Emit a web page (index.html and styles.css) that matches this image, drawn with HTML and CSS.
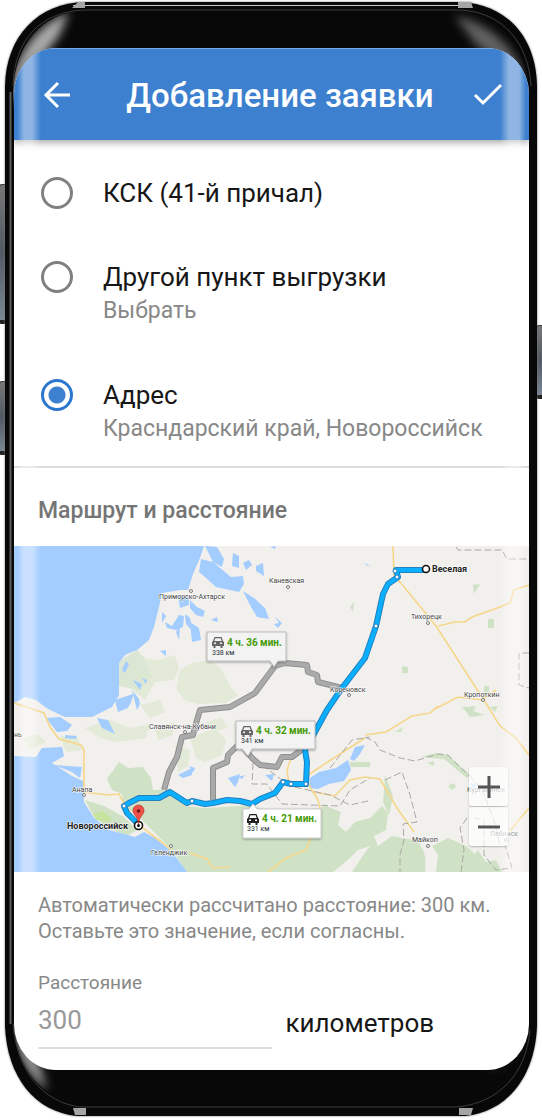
FILE: index.html
```html
<!DOCTYPE html>
<html lang="ru">
<head>
<meta charset="utf-8">
<meta name="viewport" content="width=device-width, initial-scale=1">
<title>Добавление заявки</title>
<link rel="stylesheet" href="styles.css">
</head>
<body>
<div class="phone">
  <span class="side-key side-key-volume"></span>
  <span class="side-key side-key-assist"></span>
  <span class="side-key side-key-power"></span>
  <svg class="frame" viewBox="0 0 532 1114" preserveAspectRatio="none" aria-hidden="true">
    <defs>
      <filter id="soft" x="-50%" y="-50%" width="200%" height="200%"><feGaussianBlur stdDeviation="5"/></filter>
      <linearGradient id="edge" x1="0" x2="1"><stop offset="0" stop-color="#ddd"/><stop offset=".6" stop-color="#eee"/><stop offset="1" stop-color="#666"/></linearGradient>
      <clipPath id="body"><path d="M8 90C10 42 36 11 80 8H455C500 15 522 50 525 90V1020C520 1070 490 1100 448 1105H80C38 1099 12 1068 8 1022Z"/></clipPath>
    </defs>
    <path d="M0 84C1 34 33 1 80 0H455C501 2 531 34 532 84V1024C530 1075 502 1110 460 1114H72C30 1110 2 1075 0 1024Z" fill="#080808"/>
    <g clip-path="url(#body)">
      <path d="M4 100C6 55 32 22 64 10L54 34L40 52C25 60 14 78 10 100Z" fill="#aaa" filter="url(#soft)"/>
      <path d="M518 80C518 54 490 22 450 14L472 44L500 62Z" fill="#606060" filter="url(#soft)"/>
      <path d="M8 1020C10 1050 20 1072 42 1088L34 1060Z" fill="#999" filter="url(#soft)"/>
      <path d="M524 1030C512 1056 494 1064 468 1070L496 1064Z" fill="#444" filter="url(#soft)"/>
    </g>
    <path d="M8 84C9 38 36 9 80 8H455C500 10 524 44 526 84M8 1022C12 1070 38 1100 75 1105H452C494 1101 521 1072 525 1028" fill="none" stroke="#3c3c3c"/>
    <path d="M68 3.500H464" stroke="#ccc" fill="none"/>
    <path d="M80 1109H430" stroke="url(#edge)" fill="none"/>
    <path d="M73 0H80V6H67ZM453 0H466L468 6H453ZM68 1106H81V1113H70ZM454 1106H468L466 1113H454Z" fill="#a5a5a5"/>
    <path d="M5.500 90V1022" stroke="#5c5c5c" stroke-width="2"/>
  </svg>

  <main class="screen">
    <header class="bar">
      <button class="icon-button" type="button" aria-label="Назад">
        <svg viewBox="0 0 28 28" width="28" height="28" fill="none" stroke="#fff" stroke-width="3"><path d="M27 14H3M15 2L3 14L15 26"/></svg>
      </button>
      <h1 class="title">Добавление заявки</h1>
      <button class="icon-button" type="button" aria-label="Готово">
        <svg viewBox="0 0 30 28" width="30" height="28" fill="none" stroke="#fff" stroke-width="3"><path d="M2 14L10 22L28 4"/></svg>
      </button>
    </header>

    <div class="options" role="radiogroup" aria-label="Пункт выгрузки">
      <label class="option"><input class="radio" type="radio" name="place"><span class="option-name">КСК (41-й причал)</span></label>
      <label class="option"><input class="radio" type="radio" name="place"><span class="option-name">Другой пункт выгрузки</span><span class="option-note">Выбрать</span></label>
      <label class="option"><input class="radio" type="radio" name="place" checked><span class="option-name">Адрес</span><span class="option-note">Красндарский край, Новороссийск</span></label>
    </div>

    <h2 class="section-title">Маршрут и расстояние</h2>

    <div class="map">
      <svg class="map-picture" viewBox="14 546 515 326" role="img" aria-label="Карта маршрута Веселая — Новороссийск">
        <rect x="14" y="546" width="515" height="326" fill="#f2f0ed"/>
        <g fill="#e4ead8">
          <path d="M119 662L137 650L145 658L158 660L175 655L179 668L174 680L155 682L145 700L128 686L119 686Z"/>
          <path d="M180 670L192 663L210 660L222 670L230 686L238 696L225 703L198 704L184 700L176 688Z"/>
          <path d="M140 705L160 700L165 712L150 718ZM85 728L110 720L130 728L150 724L146 738L118 742L100 738ZM60 736L78 738L82 750L66 752ZM190 738L215 728L226 740L222 755L205 762L196 758ZM22 738L38 734L46 742L30 750ZM155 728L175 722L172 736L158 740Z"/>
          <path d="M205 722L222 718L228 728L212 732ZM175 745L190 750L188 766L178 772Z"/>
        </g>
        <path d="M119 662L137 650L145 660L152 676L140 690L119 686Z" fill="#dbe6d3"/>
        <g fill="#cfe2c6">
          <path d="M107 779L119 762L128 768L143 767L151 778L153 790L163 790L171 795L187 806L205 808L240 806L252 806L275 812L318 808L326 806L341 812L338 825L346 832L355 822L370 818L382 806L388 813L386 830L374 836L378 846L392 836L418 841L424 852L428 872H187L176 856L165 843L140 818L124 806L122 794L112 790Z"/>
          <path d="M436 872L438 855L432 846L448 838L466 846L474 853L482 872ZM85 800L104 806L124 817L137 830L127 836L108 828L94 817Z"/>
          <path d="M473 872L470 860L478 850L486 862L496 860L502 872ZM350 607L354 602L353 612ZM474 594L480 584L473 585ZM488 619H494V628H488ZM402 666L408 667V673H402ZM484 686H489V694H484ZM395 732L403 727L401 732ZM448 786L454 783L456 787L452 790ZM462 706L475 709L480 702L473 711L485 715L470 717ZM460 708L475 706L474 711ZM490 707L498 706L495 712ZM385 775L393 796L389 815L383 802ZM421 757L436 753L448 755L470 775L467 778L444 759ZM427 763L434 761L434 766ZM350 762H370V767H350Z"/>
        </g>
        <path d="M93 814L103 811L112 819L108 822L96 820Z" fill="#c7e49f"/>
        <path d="M333 872L350 858L358 850L370 846L362 857L352 872ZM425 872L426 850L431 850L432 872Z" fill="#f2f0ed"/>
        <g fill="#a3ccff">
          <path d="M14 546H204L200 558L193 574L188 590L180 590L162 593L159 607L154 627L149 640L137 650L125 655L119 663V695L112 707L92 717L65 717L48 709L36 700L25 697L14 703Z"/>
          <path d="M14 756L36 757L42 748L62 747L64 756L52 763L72 776L83 781L84 802L94 818L109 830L135 837L144 832L155 838L172 852L182 865L187 872H14Z"/>
          <path d="M46 718L60 717L72 725L67 731L57 732ZM54 765L82 767L80 778L72 772ZM97 718L108 720L115 734L102 728ZM65 735L77 736L76 739L65 738ZM115 700L133 694L128 708L118 712Z"/>
          <path d="M201 559L213 562L231 577L243 576L244 584L239 592L216 587L205 577L199 572ZM205 546L217 547L224 559L222 567L213 562ZM233 553L239 556L239 568L232 566ZM243 563L249 560L252 565L246 570ZM256 566L263 563L264 576L256 571ZM243 591L254 598L265 608L269 619L257 617L251 607ZM275 617L282 623L278 628L274 624L279 623ZM276 546L270 547L275 549Z"/>
          <path d="M178 596L189 595L189 605L180 608ZM165 622L172 626L179 615L184 616L183 627L176 630L167 628ZM185 614L190 618L193 632L186 624ZM162 612L166 616L162 623ZM190 600L197 607L205 611L203 617L196 615L190 608ZM190 622L199 628L201 640L192 642ZM176 632L180 626L179 640ZM211 620L217 617L218 622ZM160 651L166 650L166 656ZM122 670L126 661L129 664L125 673ZM133 680L142 684L140 690ZM128 698L134 693L130 705L122 707ZM142 678L147 680L146 684ZM137 710L140 704L139 699L132 690Z"/>
          <path d="M310 778L319 772L336 768L348 760L351 770L344 781L329 784L318 789L309 788ZM350 759L355 747L365 745L360 754L354 761ZM228 778L240 774L238 782L235 787ZM265 775L274 774L272 781ZM178 775L192 768V775L183 778ZM189 766L195 768L193 773ZM238 777L245 775L242 779ZM470 783L476 785L474 789ZM365 563L371 567L366 565Z"/>
        </g>
        <g fill="none" stroke="#f6d68a" stroke-width="1.600">
          <path d="M14 703L44 713L50 727L59 739L81 745L84 750V792L108 795L119 794L125 805L139 825L160 841L172 851"/>
          <path d="M393 546L394 575L400 582L436 626L482 697L500 726L516 738L529 755"/>
          <path d="M438 626L455 622L465 622L472 617L500 607L510 603L514 590L529 585M433 710L458 697L482 700L496 690M365 735L386 732L412 716L430 713L438 706M314 792L335 796L350 780L365 777L380 779L397 808L414 832M307 782L318 800L321 812L306 850L286 858L268 872M190 853L207 859L213 868L230 867M289 784L287 770L291 758M529 808L518 821L510 831M308 775L343 752L365 738"/>
        </g>
        <g fill="none" stroke="#aaa8a5" stroke-dasharray="7 3">
          <path d="M456 547L458 550H502L507 559H529M529 653H519V685L529 688M365 737L375 742L380 750L400 758L415 761L438 754L448 755L458 765L474 780L483 792L494 820L500 845M385 780L402 772L410 795L417 822L403 824L404 840L400 855V872M467 818L460 828L464 850L461 872M253 763L252 784L267 784L282 804L340 806L350 790L370 778M262 765L290 786L330 795L350 805L368 801M330 768L352 740L370 737M474 818L484 820V855L496 870L512 868L505 845"/>
        </g>
        <g fill="none" stroke-linejoin="round">
          <path d="M342 688L318 682L317 675L308 672L307 665L285 663L275 666L255 693L230 707L200 710L197 720L193 735L182 737L177 757L169 772L164 790M213 800V768L227 762L228 755L240 743L252 758L260 765L277 767L282 757L292 757L305 747" stroke="#8f8f8f" stroke-width="6"/>
          <path d="M342 688L318 682L317 675L308 672L307 665L285 663L275 666L255 693L230 707L200 710L197 720L193 735L182 737L177 757L169 772L164 790M213 800V768L227 762L228 755L240 743L252 758L260 765L277 767L282 757L292 757L305 747" stroke="#aaa" stroke-width="4"/>
          <path d="M426 570H396L398 577L388 584L383 594L376 626L365 658L342 688L327 710L315 732L305 750L307 762L306 784L291 784L283 782L275 793L260 799L252 804L240 801L227 800L213 803L205 804L192 801L187 803L170 792L159 798L139 798L129 803L124 806L127 813L139 825" stroke="#247fbd" stroke-width="6"/>
          <path d="M426 570H396L398 577L388 584L383 594L376 626L365 658L342 688L327 710L315 732L305 750L307 762L306 784L291 784L283 782L275 793L260 799L252 804L240 801L227 800L213 803L205 804L192 801L187 803L170 792L159 798L139 798L129 803L124 806L127 813L139 825" stroke="#0aafff" stroke-width="4"/>
        </g>
        <g fill="#fff" stroke="#247fbd">
          <circle cx="395" cy="571" r="2"/><circle cx="397" cy="577" r="2"/><circle cx="376" cy="626" r="2"/><circle cx="306" cy="784" r="2"/><circle cx="291" cy="784" r="2"/><circle cx="283" cy="782" r="2"/><circle cx="192" cy="801" r="2"/><circle cx="124" cy="806" r="2"/>
        </g>
        <g fill="#fff" stroke="#777">
          <circle cx="191" cy="591" r="1.500"/><circle cx="288" cy="587" r="1.500"/><circle cx="428" cy="623" r="1.500"/><circle cx="349" cy="695" r="1.500"/><circle cx="483" cy="700" r="1.500"/><circle cx="185" cy="732" r="1.500"/><circle cx="84" cy="795" r="1.500"/><circle cx="171" cy="846" r="1.500"/><circle cx="428" cy="846" r="1.500"/><circle cx="506" cy="840" r="1.500"/>
        </g>
        <circle cx="426" cy="569" r="3.500" fill="#fff" stroke="#111" stroke-width="1.600"/>
        <g class="town">
          <text x="269" y="583">Каневская</text>
          <text x="159" y="599">Приморско-Ахтарск</text>
          <text x="411" y="619">Тихорецк</text>
          <text x="330" y="692">Кореновск</text>
          <text x="464" y="697">Кропоткин</text>
          <text x="149" y="729">Славянск-на-Кубани</text>
          <text x="72" y="792">Анапа</text>
          <text x="151" y="855">Геленджик</text>
          <text x="412" y="842">Майкоп</text>
          <text x="467" y="792">Курганинск</text>
          <text x="490" y="836">Лабинск</text>
          <text x="14" y="737">нь</text>
        </g>
        <g class="endpoint">
          <text x="432" y="572">Веселая</text>
          <text x="67" y="829">Новороссийск</text>
        </g>
        <circle cx="138.500" cy="825.500" r="4" fill="#fff" stroke="#111" stroke-width="1.600"/><circle cx="138.500" cy="825.500" r="1.500" fill="#111"/>
        <path d="M138.500 824C138 816 133 815 133 810.500A5.500 5.500 0 0 1 144 810.500C144 815 139 816 138.500 824Z" fill="#ee5148" stroke="#b8302a" stroke-width=".7"/><circle cx="138.500" cy="811" r="1.800" fill="#701714"/>
        <defs>
          <g id="car"><path d="M2.500 1H9.500L11 5L12 6V10H10.500V12H8.500V10H3.500V12H1.500V10H0V6L1 5ZM3.300 2.200L2.400 5H9.600L8.700 2.200ZM2 6.500V8H4V6.500ZM8 6.500V8H10V6.500Z" fill-rule="evenodd"/></g>
          <filter id="lift"><feDropShadow dx="0" dy="1" stdDeviation="1" flood-opacity=".35"/></filter>
        </defs>
        <g filter="url(#lift)">
          <path d="M207 632H286V661H278L274 667L270 661H207Z" fill="#f3f3f3" stroke="#bbb"/>
          <path d="M236 721H315V749H252L248 756L242 749H236Z" fill="#f3f3f3" stroke="#bbb"/>
          <path d="M243 809H249L253 804L257 809H321V838H243Z" fill="#fff" stroke="#ccc"/>
        </g>
        <use href="#car" x="212" y="636" fill="#666"/><use href="#car" x="241" y="725" fill="#666"/><use href="#car" x="247" y="813" fill="#222"/>
        <g class="duration"><text x="227" y="646">4 ч. 36 мин.</text><text x="256" y="734">4 ч. 32 мин.</text><text x="262" y="822">4 ч. 21 мин.</text></g>
        <g class="length"><text x="212" y="655">338 км</text><text x="241" y="743">341 км</text><text x="247" y="831">331 км</text></g>
      </svg>
      <div class="map-zoom">
        <button class="zoom-button" type="button" aria-label="Приблизить"><svg viewBox="0 0 24 24" width="24" height="24" stroke="#555" stroke-width="3"><path d="M1 12H23M12 1V23"/></svg></button>
        <button class="zoom-button" type="button" aria-label="Отдалить"><svg viewBox="0 0 24 24" width="24" height="24" stroke="#555" stroke-width="3"><path d="M1 12H23"/></svg></button>
      </div>
    </div>

    <div class="details">
      <p class="hint">Автоматически рассчитано расстояние: 300 км. Оставьте это значение, если согласны.</p>
      <label class="field-label" for="distance">Расстояние</label>
      <div class="field-row">
        <input class="field" id="distance" type="text" inputmode="numeric" value="300">
        <span class="unit">километров</span>
      </div>
    </div>
    <span class="gloss"></span>
  </main>
</div>
</body>
</html>
```
FILE: styles.css
```css
* { box-sizing: border-box; }

body {
  margin: 0;
  background: #fff;
  color: #171717;
  font-family: Roboto, "Noto Sans", sans-serif;
  overflow-x: hidden;
}

h1, h2, p { margin: 0; }

button {
  display: grid;
  place-items: center;
  border: 0;
  padding: 0;
  background: none;
}

.phone {
  position: relative;
  margin: 2px 5px;
  padding: 46px 8px 46px 9px;
}

.frame {
  position: absolute;
  inset: 0;
  width: 100%;
  height: 100%;
  filter: drop-shadow(0 0 1px #777);
}

.side-key {
  position: absolute;
  width: 8px;
  background: linear-gradient(#777, #525a64 50%, #7b8795);
  border: 1px solid #333a42;
  border-bottom: 4px solid #222;
  border-radius: 3px;
}

.side-key-volume { left: -6px; top: 182px; height: 140px; }
.side-key-assist { left: -6px; top: 379px; height: 74px; }
.side-key-power { right: -7px; top: 323px; height: 74px; }

.screen {
  position: relative;
  overflow: hidden;
  background: #fff;
  border-radius: 42px / 46px;
}

.bar {
  position: relative;
  display: flex;
  align-items: center;
  justify-content: space-between;
  height: 92px;
  padding: 0 26px 0 29px;
  background: #3d80cf;
  border-top: 1px solid #76a8e2;
  box-shadow: 0 2px 8px rgba(0, 0, 0, .4);
}

.title {
  flex: 1;
  padding: 2px 0 0 16px;
  font-size: 33px;
  font-weight: 500;
  line-height: 40px;
  text-align: center;
  color: #fff;
  white-space: nowrap;
}

.options {
  display: grid;
  gap: 50px;
  padding: 36px 24px 20px 27px;
  border-bottom: 2px solid #dcdcdc;
}

.option {
  display: grid;
  grid-template-columns: 32px 1fr;
  column-gap: 30px;
  line-height: 34px;
}

.option-name { font-size: 26px; }

.option-note {
  grid-column: 2;
  font-size: 23px;
  color: #888;
  white-space: nowrap;
}

.radio {
  appearance: none;
  align-self: center;
  width: 32px;
  height: 32px;
  margin: 0;
  border: 3px solid #808080;
  border-radius: 50%;
}

.radio:checked {
  border-color: #2b76cf;
  background: radial-gradient(circle, #3d80cf 8px, transparent 9px);
}

.section-title {
  padding: 26px 24px 18px;
  font-size: 23px;
  font-weight: 500;
  line-height: 34px;
  color: #757575;
}

.map { position: relative; }

.map-picture {
  display: block;
  width: 100%;
  height: auto;
}

.town { font-size: 7px; fill: #404040; stroke: #fff; stroke-width: 1px; paint-order: stroke; }
.endpoint { font-size: 9px; font-weight: 700; fill: #222; stroke: #fff; stroke-width: 1px; paint-order: stroke; }
.duration { font-size: 10px; font-weight: 700; fill: #459a08; }
.length { font-size: 7px; fill: #263238; }

.map-zoom {
  position: absolute;
  right: 21px;
  bottom: 26px;
  display: grid;
  gap: 1px;
}

.zoom-button {
  width: 39px;
  height: 39px;
  background: rgba(255, 255, 255, .7);
  border-radius: 3px;
  box-shadow: 0 1px 2px rgba(0, 0, 0, .25);
}

.details {
  display: grid;
  padding: 20px 24px 21px;
  line-height: 26px;
}

.hint {
  margin-bottom: 26px;
  font-size: 20px;
  color: #888;
}

.field-label {
  font-size: 19px;
  color: #888;
}

.field-row {
  display: flex;
  align-items: center;
  gap: 14px;
}

.field {
  width: 50%;
  height: 53px;
  padding: 0 0 4px;
  border: 0;
  border-bottom: 2px solid #dedede;
  outline: 0;
  background: none;
  font: 26px Roboto, "Noto Sans", sans-serif;
  color: #999;
}

.unit { font-size: 26px; }

.gloss {
  position: absolute;
  inset: 0;
  pointer-events: none;
  background:
    linear-gradient(90deg, transparent 3px, rgba(255, 255, 255, .42) 10px, rgba(255, 255, 255, .42) 18px, transparent 27px),
    linear-gradient(270deg, transparent 3px, rgba(255, 255, 255, .42) 10px, rgba(255, 255, 255, .42) 20px, transparent 29px);
}
```
